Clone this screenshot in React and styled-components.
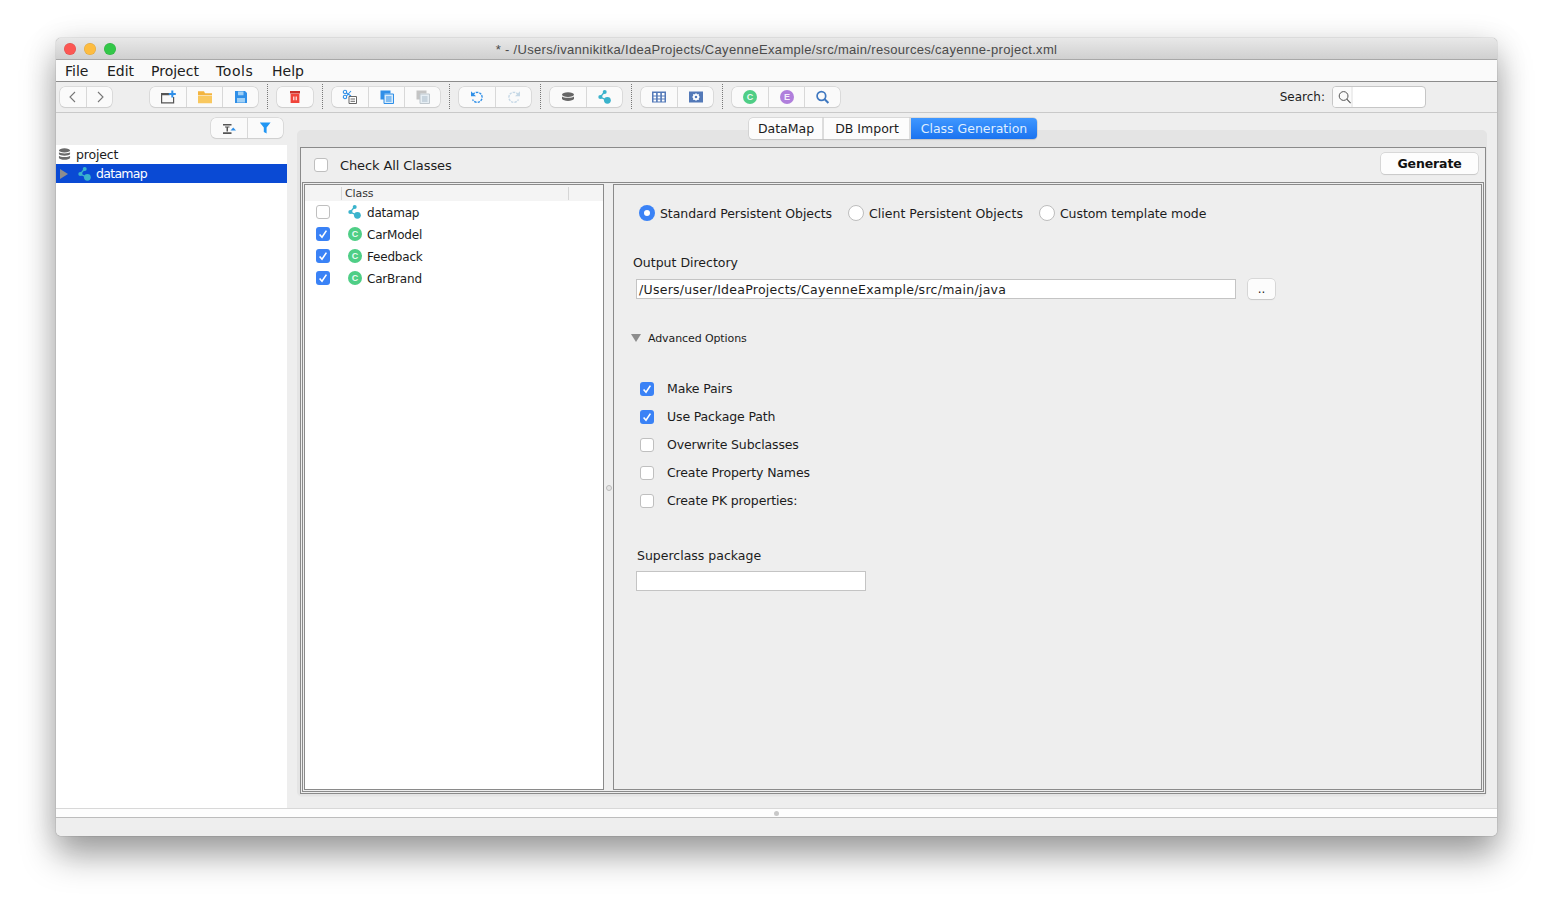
import React from "react";
import styled, { createGlobalStyle } from "styled-components";

const Global = createGlobalStyle`
  html, body { margin: 0; padding: 0; background: #fff; }
  body { width: 1553px; height: 910px; overflow: hidden; font-family: "DejaVu Sans", "Liberation Sans", sans-serif; color: #1c1c1c; }
  * { box-sizing: border-box; }
`;

const Page = styled.div`
  width: 1553px; height: 910px; padding: 38px 0 0 56px; background: #fff;
`;
const Win = styled.div`
  width: 1441px; height: 798px; display: flex; flex-direction: column; background: #eee;
  border-radius: 5px; overflow: hidden;
  box-shadow: 0 0 1px 0 rgba(0,0,0,.65), 0 20px 34px rgba(0,0,0,.34), 0 4px 32px rgba(0,0,0,.12);
`;
const TitleBar = styled.div`
  height: 22px; flex: none; position: relative; display: flex; align-items: center; justify-content: center;
  background: linear-gradient(#e8e8e8, #d0d0d0); border-bottom: 1px solid #a8a8a8;
  font: 13px "Liberation Sans", Arial, sans-serif; letter-spacing: .31px; color: #4a4a4a; padding-top: 1px;
`;
const Lights = styled.div`
  position: absolute; left: 8px; top: 5px; display: flex; gap: 8px;
`;
const Light = styled.span`
  width: 12px; height: 12px; border-radius: 50%; background: ${p => p.$c}; box-shadow: inset 0 0 0 .5px rgba(0,0,0,.12);
`;
const MenuBar = styled.div`
  height: 22px; flex: none; display: flex; align-items: center; background: #fafafa; border-bottom: 1px solid #8c8c8c;
  padding-left: 9px; font-size: 14px; color: #202020;
`;
const MenuItem = styled.span`
  width: ${p => p.$w}px; letter-spacing: ${p => p.$ls || 0}px;
`;
const ToolBar = styled.div`
  height: 31px; flex: none; display: flex; align-items: center; background: #eee; border-bottom: 1px solid #c9c9c9;
  padding: 0 71px 1px 4px;
`;
const Group = styled.div`
  display: flex; height: 20px; background: #fafafa; border-radius: 5px; margin-left: ${p => p.$ml || 0}px;
  box-shadow: 0 0 0 .5px #c8c8c8, 0 1px 1px rgba(0,0,0,.1);
`;
const ToolBtn = styled.div`
  width: ${p => p.$w || 36}px; height: 20px; display: flex; align-items: center; justify-content: center;
  & + & { border-left: 1px solid #d8d8d8; }
`;
const Sep = styled.div`
  width: 1px; height: 25px; margin: 0 9px; border-left: 1px dotted #777;
`;
const SearchLabel = styled.span`
  margin-left: auto; font-size: 12px; margin-right: 7px; padding-top: 1px;
`;
const SearchField = styled.div`
  width: 94px; height: 22px; display: flex; background: #fff; border: 1px solid #c6c6c6; border-radius: 4px; overflow: hidden;
`;
const SearchIconBox = styled.div`
  width: 20px; height: 100%; display: flex; align-items: center; padding-left: 5px; background: #fbfbfb; border-right: 2px solid #eee;
`;
const Middle = styled.div`
  flex: 1; min-height: 0; display: flex;
`;
const Sidebar = styled.div`
  width: 231px; flex: none; display: flex; flex-direction: column; background: #fff;
`;
const SideTools = styled.div`
  height: 32px; flex: none; background: #eee; display: flex; justify-content: flex-end; padding: 5px 4px 0 0;
`;
const TreeRow = styled.div`
  display: flex; align-items: center; height: 19px; font-size: 12.5px;
  padding-left: ${p => p.$pl}px; background: ${p => p.$sel ? "#0a4ad4" : "transparent"}; color: ${p => p.$sel ? "#fff" : "#1c1c1c"};
`;
const TreeLabel = styled.span`
  margin-left: ${p => p.$ml}px; letter-spacing: ${p => p.$ls}px;
`;
const MapSlot = styled.span`
  display: flex; margin-left: 10px;
`;
const Main = styled.div`
  flex: 1; min-width: 0; display: flex; flex-direction: column; padding: 5px 10px 12px 10px; background: #eee;
`;
const Tabs = styled.div`
  height: 21px; flex: none; display: flex; justify-content: center; margin-bottom: -9px; position: relative; z-index: 1; padding-left: 1px;
`;
const Tab = styled.div`
  height: 21px; width: ${p => p.$w}px; display: flex; align-items: center; justify-content: center; font-size: 12.5px; padding-left: 1px;
  background: ${p => p.$on ? "linear-gradient(#3f97ff, #1a73f0)" : "#fcfcfc"}; color: ${p => p.$on ? "#dfeeff" : "#1c1c1c"};
  box-shadow: 0 0 0 .5px #c4c4c4, 0 1px 1px rgba(0,0,0,.12);
  border-radius: ${p => p.$r || "0"};
  & + & { border-left: 1px solid #dcdcdc; }
`;
const TabPanel = styled.div`
  flex: 1; min-height: 0; background: #e4e4e4; border-radius: 5px; padding: 17px 2px 2px 3px; display: flex; box-shadow: 0 1px 0 #e9e9e9;
`;
const OuterBox = styled.div`
  flex: 1; display: flex; flex-direction: column; border: 1px solid #8a8a8a; background: #eee;
`;
const Header = styled.div`
  height: 34px; flex: none; display: flex; align-items: center; padding: 0 7px 0 13px; font-size: 13px;
`;
const HeaderLabel = styled.span`
  margin-left: 12px; margin-top: 1px; letter-spacing: -.1px;
`;
const GenerateButton = styled.div`
  margin-left: auto; margin-top: -4px; width: 97px; height: 21px; background: #fdfdfd; border-radius: 4px;
  box-shadow: 0 0 0 .5px #c2c2c2, 0 1px 1px rgba(0,0,0,.12);
  display: flex; align-items: center; justify-content: center; font-weight: 700; font-size: 12.5px; letter-spacing: -.12px; color: #111;
`;
const InnerBox = styled.div`
  flex: 1; min-height: 0; display: flex; margin: 0 1px 1px 1px; border: 1px solid #8a8a8a; padding: 1px;
`;
const TablePane = styled.div`
  width: 300px; flex: none; background: #fff; border: 1px solid #8a8a8a;
`;
const TableHead = styled.div`
  height: 16px; background: #f4f4f4; display: flex; align-items: center; font-size: 11px; letter-spacing: -.1px; color: #333;
`;
const HeadCell = styled.div`
  height: 13px; line-height: 13px; border-left: 1px solid #d6d6d6; width: ${p => p.$w}px; padding-left: 3px; margin-left: ${p => p.$ml || 0}px;
`;
const TableRow = styled.div`
  height: 22px; display: flex; align-items: center; padding-left: 11px; font-size: 12px; letter-spacing: -.2px;
`;
const RowIcon = styled.span`
  display: flex; margin-left: 18px;
`;
const RowLabel = styled.span`
  margin-left: 5px; padding-top: 2px;
`;
const Split = styled.div`
  width: 9px; flex: none; display: flex; align-items: center; justify-content: center; padding-top: 1px;
`;
const Dot = styled.span`
  width: 6px; height: 6px; border-radius: 50%; background: #e4e4e4; border: 1px solid #bbb;
`;
const FormPane = styled.div`
  width: 869px; flex: none; border: 1px solid #8a8a8a; display: flex; flex-direction: column; background: #eee; font-size: 12.5px;
`;
const RadioRow = styled.div`
  height: 20px; margin-top: 18px; display: flex; align-items: center; padding-left: 25px;
`;
const Radio = styled.span`
  width: 16px; height: 16px; border-radius: 50%; flex: none; margin-left: ${p => p.$ml || 0}px;
  background: ${p => p.$on ? "#3a82f6" : "#fff"}; border: ${p => p.$on ? "none" : "1px solid #bdbdbd"};
  display: flex; align-items: center; justify-content: center;
  &::after { content: ""; width: 6px; height: 6px; border-radius: 50%; background: ${p => p.$on ? "#fff" : "transparent"}; }
`;
const RadioLabel = styled.span`
  margin-left: 5px; letter-spacing: ${p => p.$ls}px;
`;
const FieldLabel = styled.div`
  height: 16px; line-height: 16px; margin-top: ${p => p.$mt}px; padding-left: ${p => p.$pl}px;
`;
const FieldRow = styled.div`
  display: flex; margin-top: ${p => p.$mt}px; padding-left: 22px;
`;
const TextField = styled.div`
  width: ${p => p.$w}px; height: 20px; background: #fff; border: 1px solid #c4c4c4; padding-left: 2px; line-height: 20px; font-size: 12.5px; letter-spacing: .27px;
`;
const BrowseButton = styled.div`
  width: 27px; height: 20px; margin-left: 12px; background: #fcfcfc; border-radius: 4px; font-size: 12px; display: flex; align-items: center; justify-content: center;
  box-shadow: 0 0 0 .5px #c2c2c2, 0 1px 1px rgba(0,0,0,.12);
`;
const Disclosure = styled.div`
  height: 16px; margin-top: 31px; display: flex; align-items: center; padding-left: 17px; font-size: 11px; letter-spacing: -.1px;
`;
const Triangle = styled.span`
  width: 0; height: 0; border-left: 5px solid transparent; border-right: 5px solid transparent; border-top: 8px solid #8d8d8d; margin-right: 7px;
`;
const OptionList = styled.div`
  margin-top: 28px; display: flex; flex-direction: column;
`;
const OptionRow = styled.div`
  height: 28px; display: flex; align-items: center; padding-left: 26px; letter-spacing: -.14px;
`;
const OptionBoxSlot = styled.span`
  display: flex; margin-top: 1px;
`;
const OptionLabel = styled.span`
  margin-left: 13px;
`;
const Box = styled.span`
  width: 14px; height: 14px; border-radius: 3px; flex: none; display: flex; align-items: center; justify-content: center;
  background: ${p => p.$on ? "#3a82f6" : "#fff"}; border: ${p => p.$on ? "none" : "1px solid #bfbfbf"};
`;
const Footer = styled.div`
  flex: none; height: 28px; display: flex; flex-direction: column;
`;
const FooterGrip = styled.div`
  height: 10px; background: #fdfdfd; border-top: 1px solid #d8d8d8; border-bottom: 1px solid #bcbcbc; display: flex; align-items: center; justify-content: center;
`;
const GripDot = styled.span`
  width: 5px; height: 5px; border-radius: 50%; background: #c8c8c8; margin-top: 1px;
`;
const StatusBar = styled.div`
  flex: 1; background: #eee;
`;

const Check = () => (
  <svg width="14" height="14" viewBox="0 0 14 14"><path d="M3.6 7.4 6 10.2 10.4 3.6" fill="none" stroke="#fff" strokeWidth="1.6" /></svg>
);
const CheckBox = ({ on }) => <Box $on={on}>{on && <Check />}</Box>;

const Badge = ({ bg, ch, size = 14 }) => (
  <svg width={size} height={size} viewBox="0 0 14 14">
    <circle cx="7" cy="7" r="7" fill={bg} />
    <text x="7" y="10.2" textAnchor="middle" fontSize="9" fontWeight="700" fontFamily="Liberation Sans, sans-serif" fill="#fff" fillOpacity=".9">{ch}</text>
  </svg>
);
const MapIcon = ({ c = "#3ab3cc", size = 14 }) => (
  <svg width={size} height={size} viewBox="0 0 14 14">
    <path d="M6.5 2 2.3 7 9 10.3" fill="none" stroke={c} strokeWidth="1.3" />
    <circle cx="6.7" cy="2.1" r="2" fill={c} /><circle cx="2.4" cy="7" r="2.1" fill={c} /><circle cx="9.4" cy="10.3" r="3.4" fill={c} />
  </svg>
);
const DbIcon = ({ size = 14 }) => (
  <svg width={size} height={size} viewBox="0 0 14 14" fill="#6a6a6a">
    <ellipse cx="7" cy="2.6" rx="6" ry="2.2" /><path d="M1 4.6c1 1.6 11 1.6 12 0v2.2c-1 2-11 2-12 0z" /><path d="M1 8.4c1 1.8 11 1.8 12 0v2.4c-1 2.6-11 2.6-12 0z" />
  </svg>
);
const Svg = ({ children, w = 16, h = 16 }) => <svg width={w} height={h} viewBox={`0 0 ${w} ${h}`}>{children}</svg>;

const Icons = {
  back: <Svg><path d="M10 3 5 8l5 5" fill="none" stroke="#777" strokeWidth="1.1" /></Svg>,
  fwd: <Svg><path d="M6 3l5 5-5 5" fill="none" stroke="#777" strokeWidth="1.1" /></Svg>,
  newp: <Svg><path d="M1.6 5.5v8.4h12V8" fill="none" stroke="#555" strokeWidth="1.2" /><path d="M1 4h8.6v2.2H1z" fill="#555" /><path d="M12.3 1.6v7M8.8 5h7" stroke="#2f8fe8" strokeWidth="2" /></Svg>,
  folder: <Svg><path d="M1 2.2h6l1 2h7v2H1z" fill="#f3b43f" /><path d="M1 6.8h14v7.4H1z" fill="#f9c85f" /></Svg>,
  save: <Svg><path d="M2 2h10l2 2v10H2z" fill="#2f8fe8" /><path d="M5 2.5h5.5v3.8H5zM4 9h8v4.6H4z" fill="#9fd0f6" /></Svg>,
  trash: <Svg><path d="M3 2h10v2.4H3z" fill="#c9312a" /><path d="M3.6 4.8h8.8V14H3.6z" fill="#f0443a" /><path d="M6.8 7.4v3.8M9.2 7.4v3.8" stroke="#fff" strokeWidth="1.1" /></Svg>,
  cut: <Svg><circle cx="3" cy="3" r="1.7" fill="none" stroke="#2f8fe8" strokeWidth="1.1" /><circle cx="3" cy="8" r="1.7" fill="none" stroke="#2f8fe8" strokeWidth="1.1" /><path d="M4.5 4 9 7M4.5 7 9 2" stroke="#2f8fe8" strokeWidth="1.1" /><path d="M7 7.5h7.5v7H7z" fill="#fff" stroke="#666" /><path d="M8.5 10h4.5M8.5 12.3h4.5" stroke="#666" /></Svg>,
  copy: <Svg><path d="M1.5 1.5h10v3H5.5v6h-4z" fill="#2f8fe8" /><path d="M5 5h9.5v9.5H5z" fill="#d7ebfb" stroke="#2f8fe8" /><path d="M7 8h5.5M7 10h5.5M7 12h5.5" stroke="#2f8fe8" /></Svg>,
  paste: <Svg><path d="M1.5 1.5h10v3H5.5v6h-4z" fill="#c4c4c4" /><path d="M5 5h9.5v9.5H5z" fill="#e6eef4" stroke="#c0c8ce" /><path d="M7 8h5.5M7 10h5.5M7 12h5.5" stroke="#a9bac8" /></Svg>,
  undo: <Svg><path d="M4 5.5A5 5 0 1 1 3.6 10.5" fill="none" stroke="#2f8fe8" strokeWidth="1.4" strokeDasharray="2.4 1" /><path d="M2 2.2v5h5z" fill="#2f8fe8" /></Svg>,
  redo: <Svg><path d="M12 5.5A5 5 0 1 0 12.4 10.5" fill="none" stroke="#c6d8e6" strokeWidth="1.4" strokeDasharray="2.4 1" /><path d="M14 2.2v5H9z" fill="#c6d8e6" /></Svg>,
  dbTool: <Svg><ellipse cx="8" cy="5.6" rx="6" ry="2.4" fill="#666" /><path d="M2 7.4c1 1.9 11 1.9 12 0v2.4c-1 2.8-11 2.8-12 0z" fill="#666" /></Svg>,
  table: <Svg><path d="M1 2.5h14v11H1z" fill="#5379b8" /><path d="M2.5 4h2.6v2.4H2.5zM6.7 4h2.6v2.4H6.7zM10.9 4h2.6v2.4h-2.6zM2.5 7.4h2.6v2.2H2.5zM6.7 7.4h2.6v2.2H6.7zM10.9 7.4h2.6v2.2h-2.6zM2.5 10.6h2.6v2H2.5zM6.7 10.6h2.6v2H6.7zM10.9 10.6h2.6v2h-2.6z" fill="#fff" /></Svg>,
  proc: <Svg><path d="M1 2.5h14v11H1z" fill="#5379b8" /><circle cx="8" cy="8" r="2.2" fill="none" stroke="#fff" strokeWidth="1.8" /><path d="M8 4.2v1.4M8 10.4v1.4M4.2 8h1.4M10.4 8h1.4M5.3 5.3l1 1M9.7 9.7l1 1M10.7 5.3l-1 1M6.3 9.7l-1 1" stroke="#fff" strokeWidth="1.2" /></Svg>,
  search: <Svg><circle cx="6.4" cy="7" r="4.3" fill="none" stroke="#3f78c0" strokeWidth="1.7" /><path d="M9.4 10l4 4" stroke="#3f78c0" strokeWidth="2" /></Svg>,
  sort: <Svg><path d="M2 4h8.5v1.5H2zM2 12.2h8.5V14H2zM4 6.4h4.5v1.2H7V11.4H5.5V7.6H4z" fill="#555" /><path d="M9.5 10.6h5.5L12.2 7.4z" fill="#2f8fe8" /></Svg>,
  filter: <Svg><path d="M1.8 2.5h10.8L8.6 7.5V13.5L5.8 12V7.5z" fill="#2196f3" /></Svg>,
  glass: <Svg w={13} h={14}><circle cx="5.6" cy="6" r="4.4" fill="none" stroke="#555" strokeWidth="1" /><path d="M8.8 9.2l3.8 4" stroke="#555" strokeWidth="1.1" /></Svg>,
  tri: <svg width="8" height="10" viewBox="0 0 8 10"><path d="M0 0l8 5-8 5z" fill="#8d8d8d" /></svg>,
};

const classes = [
  { name: "datamap", on: false, map: true },
  { name: "CarModel", on: true },
  { name: "Feedback", on: true },
  { name: "CarBrand", on: true },
];
const options = [
  ["Make Pairs", true], ["Use Package Path", true], ["Overwrite Subclasses", false],
  ["Create Property Names", false], ["Create PK properties:", false],
];

export default function App() {
  return (
    <Page>
      <Global />
      <Win>
        <TitleBar>
          <Lights>
            <Light $c="#fc5753" /><Light $c="#fdbc40" /><Light $c="#33c748" />
          </Lights>
          * - /Users/ivannikitka/IdeaProjects/CayenneExample/src/main/resources/cayenne-project.xml
        </TitleBar>
        <MenuBar>
          <MenuItem $w={42}>File</MenuItem>
          <MenuItem $w={44}>Edit</MenuItem>
          <MenuItem $w={65}>Project</MenuItem>
          <MenuItem $w={56} $ls={.6}>Tools</MenuItem>
          <MenuItem $w={40}>Help</MenuItem>
        </MenuBar>
        <ToolBar>
          <Group><ToolBtn $w={26}>{Icons.back}</ToolBtn><ToolBtn $w={26}>{Icons.fwd}</ToolBtn></Group>
          <Group $ml={38}><ToolBtn>{Icons.newp}</ToolBtn><ToolBtn>{Icons.folder}</ToolBtn><ToolBtn>{Icons.save}</ToolBtn></Group>
          <Sep />
          <Group><ToolBtn>{Icons.trash}</ToolBtn></Group>
          <Sep />
          <Group><ToolBtn>{Icons.cut}</ToolBtn><ToolBtn>{Icons.copy}</ToolBtn><ToolBtn>{Icons.paste}</ToolBtn></Group>
          <Sep />
          <Group><ToolBtn>{Icons.undo}</ToolBtn><ToolBtn>{Icons.redo}</ToolBtn></Group>
          <Sep />
          <Group><ToolBtn>{Icons.dbTool}</ToolBtn><ToolBtn><MapIcon /></ToolBtn></Group>
          <Sep />
          <Group><ToolBtn>{Icons.table}</ToolBtn><ToolBtn>{Icons.proc}</ToolBtn></Group>
          <Sep />
          <Group><ToolBtn><Badge bg="#4fce86" ch="C" /></ToolBtn><ToolBtn><Badge bg="#b07fdc" ch="E" /></ToolBtn><ToolBtn>{Icons.search}</ToolBtn></Group>
          <SearchLabel>Search:</SearchLabel>
          <SearchField><SearchIconBox>{Icons.glass}</SearchIconBox></SearchField>
        </ToolBar>
        <Middle>
          <Sidebar>
            <SideTools>
              <Group><ToolBtn>{Icons.sort}</ToolBtn><ToolBtn>{Icons.filter}</ToolBtn></Group>
            </SideTools>
            <TreeRow $pl={2}><DbIcon size={13} /><TreeLabel $ml={5} $ls={-.15}>project</TreeLabel></TreeRow>
            <TreeRow $pl={4} $sel>{Icons.tri}<MapSlot><MapIcon size={14} /></MapSlot><TreeLabel $ml={4} $ls={-.7}>datamap</TreeLabel></TreeRow>
          </Sidebar>
          <Main>
            <Tabs>
              <Tab $w={74} $r="4px 0 0 4px">DataMap</Tab>
              <Tab $w={87}>DB Import</Tab>
              <Tab $w={127} $on $r="0 4px 4px 0">Class Generation</Tab>
            </Tabs>
            <TabPanel>
              <OuterBox>
                <Header>
                  <CheckBox />
                  <HeaderLabel>Check All Classes</HeaderLabel>
                  <GenerateButton>Generate</GenerateButton>
                </Header>
                <InnerBox>
                  <TablePane>
                    <TableHead>
                      <HeadCell $w={227} $ml={36}>Class</HeadCell>
                      <HeadCell $w={30} />
                    </TableHead>
                    {classes.map(c => (
                      <TableRow key={c.name}>
                        <CheckBox on={c.on} />
                        <RowIcon>{c.map ? <MapIcon size={14} /> : <Badge bg="#4fce86" ch="C" />}</RowIcon>
                        <RowLabel>{c.name}</RowLabel>
                      </TableRow>
                    ))}
                  </TablePane>
                  <Split><Dot /></Split>
                  <FormPane>
                    <RadioRow>
                      <Radio $on /><RadioLabel $ls={-.07}>Standard Persistent Objects</RadioLabel>
                      <Radio $ml={16} /><RadioLabel $ls={.03}>Client Persistent Objects</RadioLabel>
                      <Radio $ml={16} /><RadioLabel $ls={-.07}>Custom template mode</RadioLabel>
                    </RadioRow>
                    <FieldLabel $mt={32} $pl={19}>Output Directory</FieldLabel>
                    <FieldRow $mt={8}>
                      <TextField $w={600}>/Users/user/IdeaProjects/CayenneExample/src/main/java</TextField>
                      <BrowseButton>..</BrowseButton>
                    </FieldRow>
                    <Disclosure><Triangle />Advanced Options</Disclosure>
                    <OptionList>
                      {options.map(([label, on]) => (
                        <OptionRow key={label}><OptionBoxSlot><CheckBox on={on} /></OptionBoxSlot><OptionLabel>{label}</OptionLabel></OptionRow>
                      ))}
                    </OptionList>
                    <FieldLabel $mt={34} $pl={23}>Superclass package</FieldLabel>
                    <FieldRow $mt={7}><TextField $w={230} /></FieldRow>
                  </FormPane>
                </InnerBox>
              </OuterBox>
            </TabPanel>
          </Main>
        </Middle>
        <Footer>
          <FooterGrip><GripDot /></FooterGrip>
          <StatusBar />
        </Footer>
      </Win>
    </Page>
  );
}
